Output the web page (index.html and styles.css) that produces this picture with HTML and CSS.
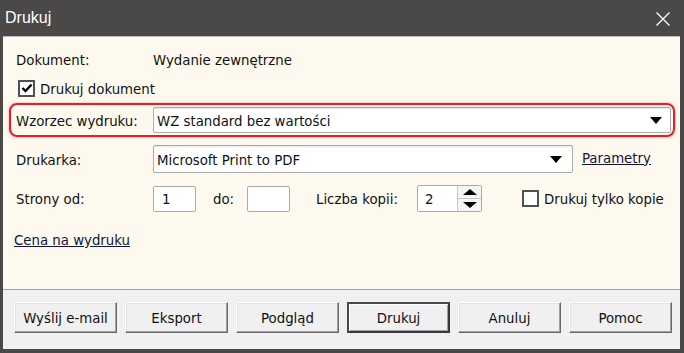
FILE: index.html
```html
<!DOCTYPE html>
<html lang="pl">
<head>
    <meta charset="UTF-8">
    <meta name="viewport" content="width=device-width, initial-scale=1.0">
    <title>Drukuj</title>
    <link rel="stylesheet" href="styles.css">
</head>
<body>
    <div class="window">
        <div class="titlebar">
            <span class="title">Drukuj</span>
            <svg class="close" width="16" height="16" viewBox="0 0 16 16">
                <path d="M1.5 1.5 L14.5 14.5 M14.5 1.5 L1.5 14.5" stroke="#fff" stroke-width="1.3" fill="none"/>
            </svg>
        </div>

        <div class="content">
            <div class="row row-doc">
                <span class="label">Dokument:</span>
                <span>Wydanie zewnętrzne</span>
            </div>

            <div class="row row-check">
                <span class="checkbox">
                    <svg width="12" height="12" viewBox="0 0 12 12">
                        <path d="M1.5 6 L4.5 9 L10.5 2.5" stroke="#000" stroke-width="2.4" fill="none"/>
                    </svg>
                </span>
                <span>Drukuj dokument</span>
            </div>

            <div class="highlight">
                <span class="label">Wzorzec wydruku:</span>
                <div class="select select-template">
                    <span>WZ standard bez wartości</span>
                    <span class="arrow"></span>
                </div>
            </div>

            <div class="row row-printer">
                <span class="label">Drukarka:</span>
                <div class="select select-printer">
                    <span>Microsoft Print to PDF</span>
                    <span class="arrow"></span>
                </div>
                <a class="link params-link" href="#">Parametry</a>
            </div>

            <div class="row row-pages">
                <span class="label">Strony od:</span>
                <div class="field">1</div>
                <span class="label-to">do:</span>
                <div class="field"></div>
                <span class="label-copies">Liczba kopii:</span>
                <div class="spinner">
                    <span class="spin-value">2</span>
                    <span class="spin-buttons">
                        <span class="spin-btn"><span class="tri-up"></span></span>
                        <span class="spin-btn"><span class="tri-down"></span></span>
                    </span>
                </div>
                <span class="copies-only">
                    <span class="checkbox"></span>
                    <span>Drukuj tylko kopie</span>
                </span>
            </div>

            <a class="link price-link" href="#">Cena na wydruku</a>
        </div>

        <div class="footer">
            <button class="btn">Wyślij e-mail</button>
            <button class="btn">Eksport</button>
            <button class="btn">Podgląd</button>
            <button class="btn btn-default">Drukuj</button>
            <button class="btn">Anuluj</button>
            <button class="btn">Pomoc</button>
        </div>
    </div>
</body>
</html>
```

FILE: styles.css
```css
* {
    box-sizing: border-box;
}
body {
    margin: 0;
    background: #4a4947;
    font-family: "DejaVu Sans Condensed", "DejaVu Sans", sans-serif;
    font-stretch: condensed;
    font-size: 14.8px;
    color: #111;
}
.window {
    width: 684px;
    height: 353px;
    padding: 0 4px 4px 3px;
    background: #4a4947;
    display: flex;
    flex-direction: column;
}
.titlebar {
    height: 36px;
    flex-shrink: 0;
    display: flex;
    align-items: center;
    justify-content: space-between;
    padding: 0 13px 0 3px;
    margin-left: -3px;
    margin-right: -4px;
    color: #fff;
}
.title {
    font-family: "Liberation Sans", sans-serif;
    font-stretch: normal;
    font-size: 16px;
    padding-left: 2px;
    margin-top: -1px;
}
.close {
    margin-top: 1px;
}
.content {
    height: 253px;
    flex-shrink: 0;
    background: #fdf9ee;
    border-top: 1px solid #bcbcbc;
    padding: 12px 0 0 13px;
}
.row {
    display: flex;
    align-items: center;
}
.label {
    width: 137px;
    flex-shrink: 0;
}
.row-doc {
    height: 20px;
}
.row-check {
    height: 18px;
    margin-top: 10px;
    padding-left: 2px;
}
.checkbox {
    width: 17px;
    height: 17px;
    border: 2px solid #505050;
    background: #fff;
    display: flex;
    align-items: center;
    justify-content: center;
    margin-right: 5px;
    flex-shrink: 0;
}
.highlight {
    display: flex;
    align-items: center;
    width: 666px;
    height: 34px;
    margin: 6px 0 0 -7px;
    padding: 0 2px 0 5px;
    border: 2px solid #ec1c24;
    border-radius: 8px;
    box-shadow: 0 0 2px rgba(236, 28, 36, 0.5);
}
.select {
    height: 26px;
    display: flex;
    align-items: center;
    justify-content: space-between;
    padding: 0 8px 0 3px;
    background: #fff;
    border: 1px solid #ababab;
    border-radius: 2px;
    box-shadow: inset 0 1px 1px #e6e6e6;
}
.select-template {
    width: 518px;
}
.select-printer {
    width: 420px;
    height: 28px;
    padding-right: 10px;
}
.arrow {
    width: 0;
    height: 0;
    border-left: 6px solid transparent;
    border-right: 6px solid transparent;
    border-top: 7px solid #000;
}
.row-printer {
    height: 28px;
    margin-top: 8px;
}
.link {
    color: #14143c;
    text-decoration: underline;
}
.params-link {
    margin-left: 9px;
    margin-top: -4px;
}
.row-pages {
    height: 27px;
    margin-top: 12px;
}
.field {
    width: 43px;
    height: 26px;
    padding-left: 8px;
    display: flex;
    align-items: center;
    background: #fff;
    border: 1px solid #ababab;
    border-radius: 2px;
}
.label-to {
    width: 34px;
    margin-left: 17px;
}
.label-copies {
    width: 101px;
    margin-left: 26px;
}
.spinner {
    width: 65px;
    height: 27px;
    display: flex;
    background: #fff;
    border: 1px solid #ababab;
    border-radius: 2px;
}
.spin-value {
    flex: 1;
    padding-left: 7px;
    display: flex;
    align-items: center;
}
.spin-buttons {
    width: 24px;
    display: flex;
    flex-direction: column;
    border-left: 1px solid #c8c8c8;
}
.spin-btn {
    flex: 1;
    display: flex;
    align-items: center;
    justify-content: center;
    background: #f4f4f4;
}
.spin-btn + .spin-btn {
    border-top: 1px solid #c8c8c8;
}
.tri-up {
    border-left: 7px solid transparent;
    border-right: 7px solid transparent;
    border-bottom: 6px solid #000;
}
.tri-down {
    border-left: 7px solid transparent;
    border-right: 7px solid transparent;
    border-top: 6px solid #000;
}
.copies-only {
    display: flex;
    align-items: center;
    margin-left: 40px;
}
.price-link {
    display: inline-block;
    margin: 19px 0 0 -2px;
    line-height: 18px;
}
.footer {
    height: 60px;
    flex-shrink: 0;
    background: #f0f0f0;
    border-top: 1px solid #a0a0a0;
    display: flex;
    gap: 8px;
    padding: 12px 0 0 11px;
    align-items: flex-start;
}
.btn {
    width: 103px;
    height: 31px;
    flex-shrink: 0;
    font-family: inherit;
    font-stretch: condensed;
    font-size: 14.8px;
    color: #111;
    background: #f0f0f0;
    border: 1px solid;
    border-color: #fff #696969 #696969 #fff;
    box-shadow: inset -1px -1px 0 #a0a0a0, inset 1px 1px 0 #e3e3e3;
    padding: 0;
}
.btn-default {
    border: 2px solid;
    border-color: #4a4a4a #3a3a3a #3a3a3a #4a4a4a;
    box-shadow: inset 1px 1px 0 #fff, inset -1px -1px 0 #a0a0a0;
}
```
